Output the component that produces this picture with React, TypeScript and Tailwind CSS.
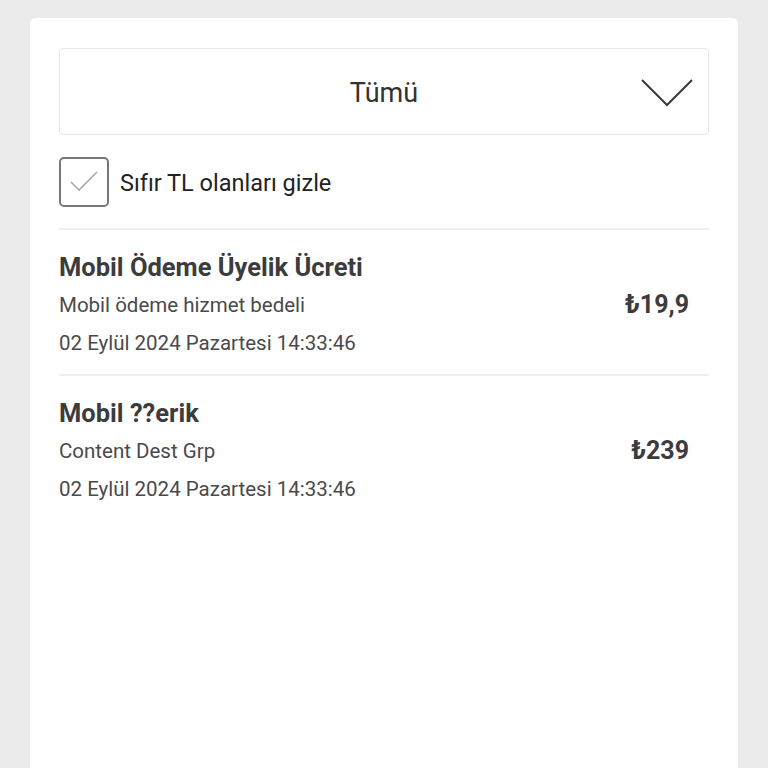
import React from "react";

const items = [
  {
    title: "Mobil Ödeme Üyelik Ücreti",
    sub: "Mobil ödeme hizmet bedeli",
    date: "02 Eylül 2024 Pazartesi 14:33:46",
    price: "₺19,9",
  },
  {
    title: "Mobil ??erik",
    sub: "Content Dest Grp",
    date: "02 Eylül 2024 Pazartesi 14:33:46",
    price: "₺239",
  },
];

export default function App() {
  return (
    <div
      className="min-h-screen bg-[#ebebeb] pt-[18px] px-[30px]"
      style={{ fontFamily: "Roboto, 'Noto Sans', sans-serif" }}
    >
      <div className="bg-white rounded-t-[6px] min-h-[750px] px-[29px] pt-[30px]">
        <div className="relative h-[87px] border border-[#e6e6e6] rounded-[4px] flex items-center justify-center pt-[3px]">
          <span className="text-[27px] text-[#333]">Tümü</span>
          <svg
            className="absolute right-[14px] top-[29px]"
            width="54"
            height="30"
            viewBox="0 0 54 30"
          >
            <path d="M2 2 L27 27 L52 2" fill="none" stroke="#3a3a3a" strokeWidth="2" />
          </svg>
        </div>
        <div className="flex items-center mt-[22px] gap-[11px]">
          <div className="w-[50px] h-[50px] border-2 border-[#777] rounded-[5px] flex items-center justify-center">
            <svg width="30" height="24" viewBox="0 0 30 24">
              <path d="M2 12 L10 20 L28 2" fill="none" stroke="#aaa" strokeWidth="1.6" />
            </svg>
          </div>
          <span className="text-[23.5px] text-[#222] pt-[3px]">Sıfır TL olanları gizle</span>
        </div>
        <div className="mt-[21px]">
          {items.map((it, i) => (
            <div
              key={i}
              className="border-t-2 border-[#eeeeee] flex items-center justify-between pt-[18px] pb-[12px] pr-[20px]"
            >
              <div className="flex flex-col">
                <span className="text-[25.5px] leading-[38px] font-bold text-[#3c3c3c]">{it.title}</span>
                <span className="text-[20.5px] leading-[38px] text-[#4a4a4a]">{it.sub}</span>
                <span className="text-[20.5px] leading-[38px] text-[#4a4a4a]">{it.date}</span>
              </div>
              <span className="text-[25px] font-bold text-[#3c3c3c]">{it.price}</span>
            </div>
          ))}
        </div>
      </div>
    </div>
  );
}
